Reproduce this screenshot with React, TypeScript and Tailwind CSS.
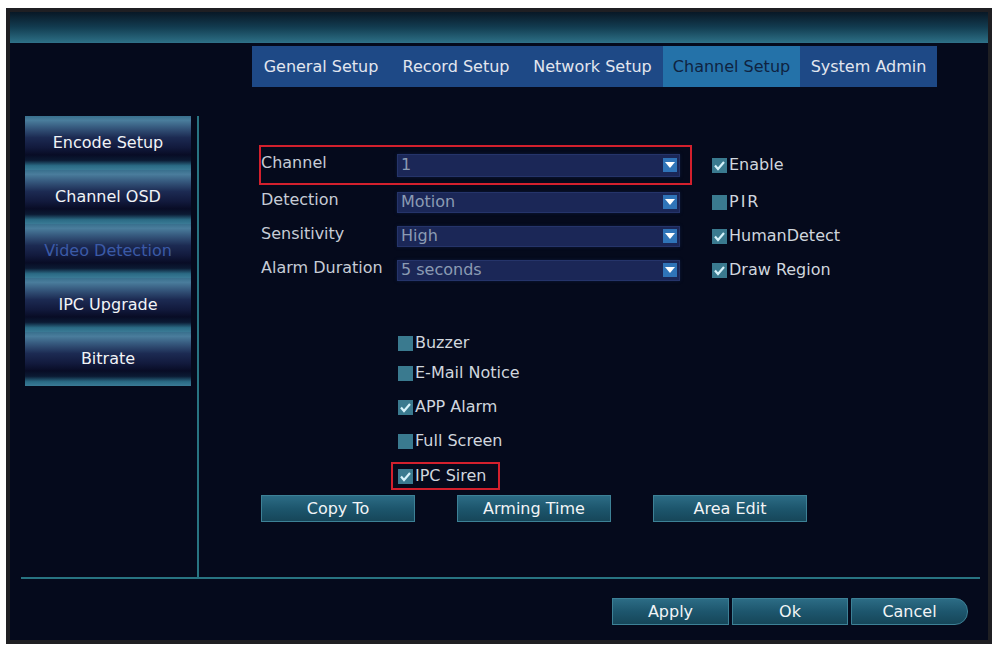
import React from 'react';

const font = { fontFamily: '"DejaVu Sans", Verdana, sans-serif' };

const tabs = [
  { label: 'General Setup', w: 'w-[138px]' },
  { label: 'Record Setup', w: 'w-[132px]' },
  { label: 'Network Setup', w: 'w-[141px]' },
  { label: 'Channel Setup', w: 'w-[137px]', active: true },
  { label: 'System Admin', w: 'w-[137px]' },
];

const sideItems = ['Encode Setup', 'Channel OSD', 'Video Detection', 'IPC Upgrade', 'Bitrate'];

function Check({ checked }: { checked: boolean }) {
  return (
    <span className="w-[15px] h-[15px] bg-[#3a7a8f] flex items-center justify-center shrink-0">
      {checked && (
        <svg width="13" height="13" viewBox="0 0 13 13">
          <polyline points="2,6.5 5,10 11,3" fill="none" stroke="#d6f2fa" strokeWidth="2.2" />
        </svg>
      )}
    </span>
  );
}

function CheckItem({ label, checked, wide }: { label: string; checked: boolean; wide?: boolean }) {
  return (
    <div className="flex items-center gap-[2px]">
      <Check checked={checked} />
      <span className={`text-[16px] text-[#d0d6de] ${wide ? 'tracking-[2px]' : ''}`}>{label}</span>
    </div>
  );
}

function Select({ value, tall }: { value: string; tall?: boolean }) {
  return (
    <div
      className={`w-[283px] ${tall ? 'h-[23px]' : 'h-[21px]'} bg-[#1b2757] border border-[#25346a] shadow-[0_0_3px_#0c1a3a] flex items-center justify-between`}
    >
      <span className="pl-[3px] text-[16px] text-[#8b9bb3]">{value}</span>
      <span className="w-[14px] h-[14px] bg-[#2f74b8] mr-[2px] flex items-center justify-center">
        <svg width="10" height="6" viewBox="0 0 10 6">
          <polygon points="0,0 10,0 5,6" fill="#ffffff" />
        </svg>
      </span>
    </div>
  );
}

function FormRow({
  label,
  value,
  checkLabel,
  checked,
  highlight,
  wide,
}: {
  label: string;
  value: string;
  checkLabel: string;
  checked: boolean;
  highlight?: boolean;
  wide?: boolean;
}) {
  return (
    <div className="flex items-center">
      <div
        className={`w-[433px] ${highlight ? 'h-[40px] border-[#d3202d]' : 'h-[34px] border-transparent'} border-2 flex items-center`}
      >
        <span className={`w-[136px] text-[16px] text-[#c6ccd6] ${highlight ? '-mt-[5px]' : '-mt-[4px]'}`}>{label}</span>
        <Select value={value} tall={highlight} />
      </div>
      <div className="ml-[20px]">
        <CheckItem label={checkLabel} checked={checked} wide={wide} />
      </div>
    </div>
  );
}

function TealButton({ label, className = '' }: { label: string; className?: string }) {
  return (
    <button
      className={`h-[27px] border border-[#3d8196] bg-gradient-to-b from-[#2c6c85] via-[#1d566d] to-[#164659] text-[16px] text-[#f2f4f6] flex items-center justify-center ${className}`}
    >
      {label}
    </button>
  );
}

export default function App() {
  return (
    <div className="w-[999px] h-[650px] bg-white pt-[8px] pl-[6px]" style={font}>
      <div className="w-[986px] h-[636px] border-4 border-[#1f1f23] bg-[#050a1c] flex flex-col">
        {/* title bar */}
        <div className="h-[31px] bg-gradient-to-b from-[#081826] via-[#123c50] to-[#2c6e84] border-b border-[#2f7088]" />

        {/* tabs */}
        <div className="mt-[3px] ml-[242px] h-[41px] flex">
          {tabs.map(t => (
            <div
              key={t.label}
              className={`${t.w} h-full flex items-center justify-center text-[16px] ${
                t.active ? 'bg-[#2472a9] text-[#0f2341]' : 'bg-[#1e4986] text-[#e2e6ef]'
              }`}
            >
              {t.label}
            </div>
          ))}
        </div>

        {/* main */}
        <div className="mt-[29px] h-[461px] flex">
          <div className="pl-[15px] w-[187px]">
            <div className="w-[166px] flex flex-col">
              {sideItems.map(s => (
                <div
                  key={s}
                  className="h-[54px] flex items-center justify-center text-[16px] bg-[linear-gradient(to_bottom,#386f8d_0%,#4a7d9c_8%,#35577c_22%,#1c2a52_40%,#121a3d_58%,#080c25_72%,#0b1a33_82%,#2a6a84_92%,#3b7b96_100%)]"
                >
                  <span className={s === 'Video Detection' ? 'text-[#3b5aa7]' : 'text-[#f1f3f6]'}>{s}</span>
                </div>
              ))}
            </div>
          </div>
          <div className="w-[2px] h-full bg-[#287482]" />

          <div className="pl-[60px] flex flex-col">
            <div className="mt-[29px]">
              <FormRow label="Channel" value="1" checkLabel="Enable" checked highlight />
            </div>
            <FormRow label="Detection" value="Motion" checkLabel="PIR" checked={false} wide />
            <FormRow label="Sensitivity" value="High" checkLabel="HumanDetect" checked />
            <FormRow label="Alarm Duration" value="5 seconds" checkLabel="Draw Region" checked />

            <div className="ml-[132px] flex flex-col">
              <div className="mt-[41px] h-[30px] w-[140px] border-2 border-transparent pl-[5px] flex items-center">
                <CheckItem label="Buzzer" checked={false} />
              </div>
              <div className="h-[30px] w-[140px] border-2 border-transparent pl-[5px] flex items-center">
                <CheckItem label="E-Mail Notice" checked={false} />
              </div>
              <div className="mt-[4px] h-[30px] w-[140px] border-2 border-transparent pl-[5px] flex items-center">
                <CheckItem label="APP Alarm" checked />
              </div>
              <div className="mt-[4px] h-[30px] w-[140px] border-2 border-transparent pl-[5px] flex items-center">
                <CheckItem label="Full Screen" checked={false} />
              </div>
              <div className="mt-[6px] h-[28px] w-[109px] border-2 border-[#d3202d] pl-[5px] flex items-center">
                <CheckItem label="IPC Siren" checked />
              </div>
            </div>

            <div className="mt-[5px] ml-[2px] flex gap-[42px]">
              <TealButton label="Copy To" className="w-[154px]" />
              <TealButton label="Arming Time" className="w-[154px]" />
              <TealButton label="Area Edit" className="w-[154px]" />
            </div>
          </div>
        </div>

        {/* bottom rule */}
        <div className="ml-[11px] w-[959px] h-[2px] bg-[#287482]" />

        {/* bottom buttons */}
        <div className="mt-[19px] mr-[20px] flex justify-end gap-[3px]">
          <TealButton label="Apply" className="w-[117px] h-[26px]" />
          <TealButton label="Ok" className="w-[116px] h-[26px]" />
          <TealButton label="Cancel" className="w-[117px] h-[26px] rounded-r-[13px]" />
        </div>
      </div>
    </div>
  );
}
